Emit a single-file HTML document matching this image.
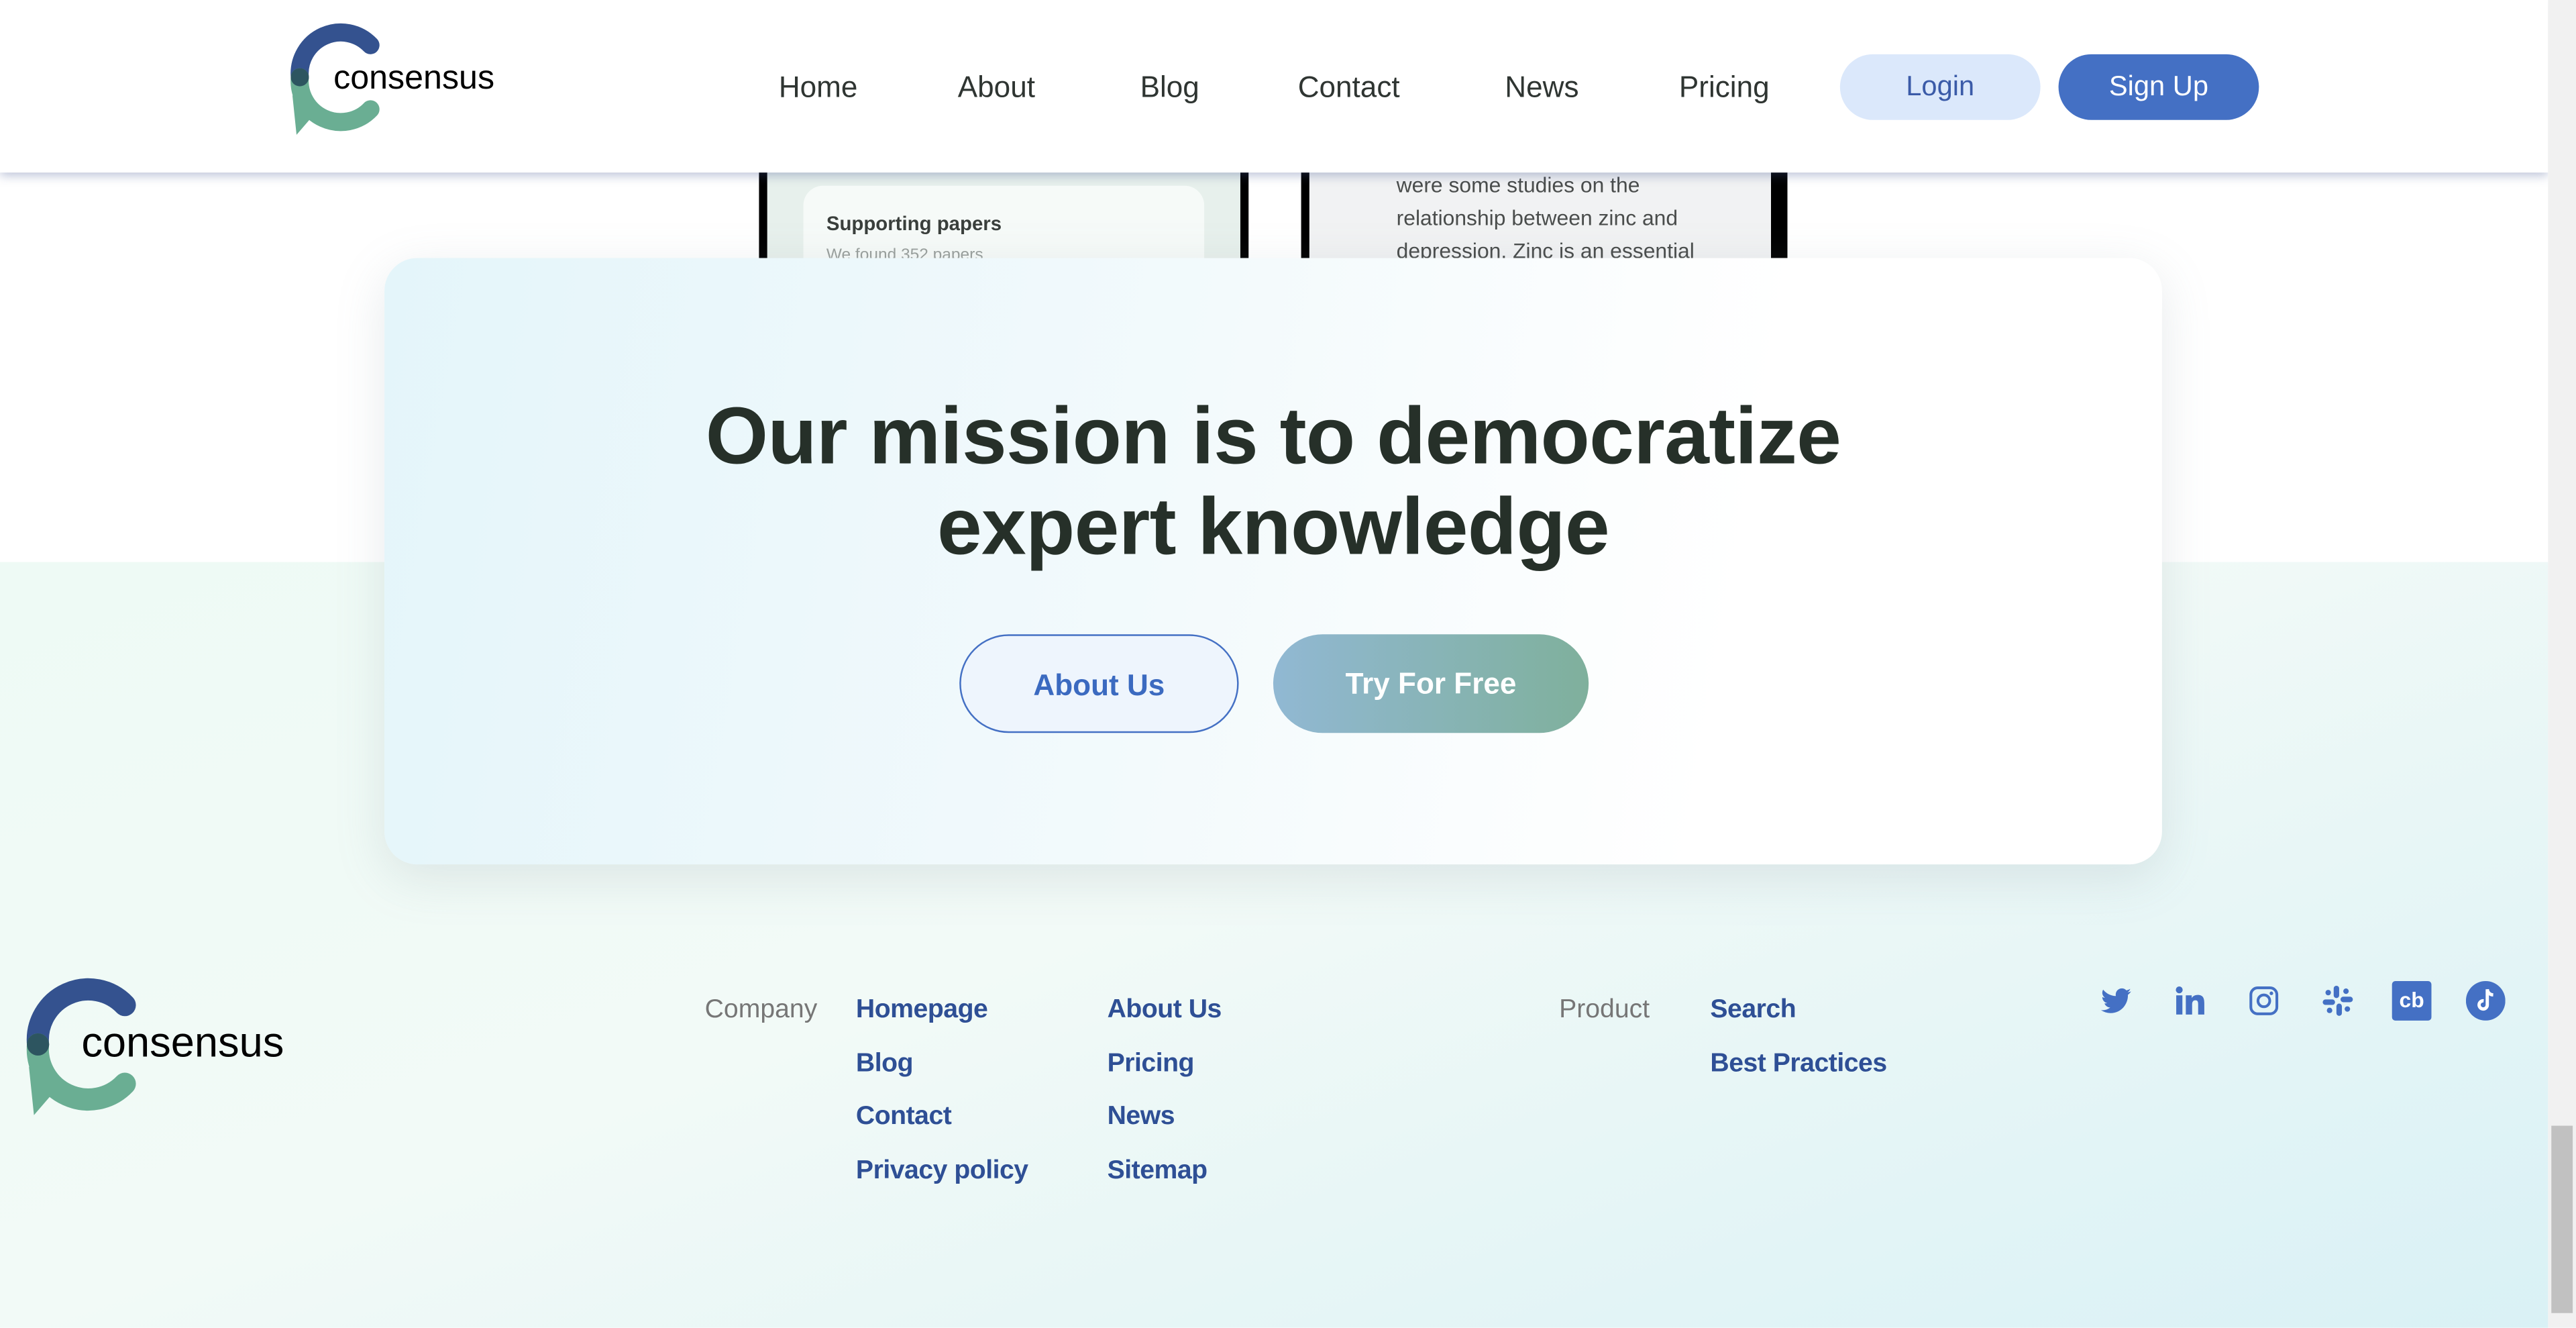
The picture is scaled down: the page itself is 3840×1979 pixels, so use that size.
<!DOCTYPE html>
<html><head><meta charset="utf-8">
<style>
html,body{margin:0;padding:0;width:3840px;height:1978px;overflow:hidden;background:#fff}
#s{position:absolute;left:0;top:0;width:1568px;height:808px;transform:scale(2.44898);transform-origin:0 0;font-family:"Liberation Sans",sans-serif;overflow:hidden}
.a{position:absolute}
.nav{position:absolute;top:43px;font-size:18px;color:#2f3532;line-height:20px}
.lk{position:absolute;font-size:16px;font-weight:bold;color:#2e4f95;line-height:18px;letter-spacing:-0.2px}
.gl{position:absolute;font-size:16px;color:#767676;line-height:18px}
.ic{position:absolute;top:599px;width:20px;height:20px}
</style></head><body><div id="s">
<div class="a" style="left:0;top:342px;width:1551px;height:466px;background:linear-gradient(160deg,#eefaf5 0%,#f2faf7 45%,#e2f4f6 80%,#d9f1f5 100%)"></div>
<div class="a" style="left:462px;top:95px;width:298px;height:62px;background:#000"></div>
<div class="a" style="left:467px;top:95px;width:288px;height:62px;background:#e7f0ec"></div>
<div class="a" style="left:489px;top:113px;width:244px;height:60px;background:#f6faf8;border-radius:12px"></div>
<div class="a" style="left:503px;top:129px;font-size:12px;font-weight:bold;color:#3a3f3c">Supporting papers</div>
<div class="a" style="left:503px;top:150px;font-size:10px;color:#9aa09d">We found 352 papers</div>
<div class="a" style="left:792px;top:95px;width:296px;height:62px;background:#000"></div>
<div class="a" style="left:797px;top:95px;width:281px;height:62px;background:#f1f2f3"></div>
<div class="a" style="left:850px;top:103px;font-size:13px;line-height:20px;color:#4a4d4c">were some studies on the<br>relationship between zinc and<br>depression. Zinc is an essential</div>
<div class="a" style="left:0;top:0;width:1551px;height:105px;background:#fff;box-shadow:0 2px 6px rgba(60,80,140,.35)"></div>
<svg class="a" style="left:176px;top:14px" width="130" height="70" viewBox="0 0 130 70">
<polygon points="2,44 14,57 4.5,68" fill="#6aae93"/>
<path d="M49.5 13.5 A25 25 0 0 0 6.5 33" fill="none" stroke="#34528f" stroke-width="11" stroke-linecap="round"/>
<path d="M6.5 33 A25 25 0 0 0 49.5 52.5" fill="none" stroke="#6aae93" stroke-width="11" stroke-linecap="round"/>
<circle cx="6.5" cy="33" r="5.5" fill="#2d5560"/>
<text x="27" y="40" font-family="Liberation Sans,sans-serif" font-size="20.5" fill="#000">consensus</text>
</svg>
<div class="nav" style="left:474px">Home</div>
<div class="nav" style="left:583px">About</div>
<div class="nav" style="left:694px">Blog</div>
<div class="nav" style="left:790px">Contact</div>
<div class="nav" style="left:916px">News</div>
<div class="nav" style="left:1022px">Pricing</div>
<div class="a" style="left:1120px;top:33px;width:122px;height:40px;border-radius:20px;background:#dbe8fb;color:#3b5ba8;font-size:17px;line-height:40px;text-align:center">Login</div>
<div class="a" style="left:1253px;top:33px;width:122px;height:40px;border-radius:20px;background:#4470c4;color:#fff;font-size:17px;line-height:40px;text-align:center">Sign Up</div>
<div class="a" style="left:234px;top:157px;width:1082px;height:369px;border-radius:20px;background:linear-gradient(100deg,#e4f5fa 0%,#f3fafc 45%,#ffffff 75%);box-shadow:0 8px 30px rgba(120,140,150,.18)"></div>
<div class="a" style="left:234px;top:239px;width:1082px;text-align:center;font-size:49px;font-weight:bold;color:#263029;line-height:55px;letter-spacing:-0.3px">Our mission is to democratize<br>expert knowledge</div>
<div class="a" style="left:584px;top:386px;width:168px;height:58px;border:1px solid #4470c4;border-radius:30px;background:#eef5fd;color:#3b6ac0;font-size:18px;font-weight:bold;line-height:60px;text-align:center">About Us</div>
<div class="a" style="left:775px;top:386px;width:192px;height:60px;border-radius:30px;background:linear-gradient(90deg,#91b8d3,#7fb09c);color:#fff;font-size:18px;font-weight:bold;line-height:61px;text-align:center">Try For Free</div>
<svg class="a" style="left:15px;top:595px" width="160" height="86" viewBox="0 0 130 70">
<polygon points="2,44 14,57 4.5,68" fill="#6aae93"/>
<path d="M49.5 13.5 A25 25 0 0 0 6.5 33" fill="none" stroke="#34528f" stroke-width="11" stroke-linecap="round"/>
<path d="M6.5 33 A25 25 0 0 0 49.5 52.5" fill="none" stroke="#6aae93" stroke-width="11" stroke-linecap="round"/>
<circle cx="6.5" cy="33" r="5.5" fill="#2d5560"/>
<text x="28" y="39" font-family="Liberation Sans,sans-serif" font-size="21" fill="#000">consensus</text>
</svg>
<div class="gl" style="left:429px;top:606px">Company</div>
<div class="lk" style="left:521px;top:606px">Homepage</div>
<div class="lk" style="left:521px;top:639px">Blog</div>
<div class="lk" style="left:521px;top:671px">Contact</div>
<div class="lk" style="left:521px;top:704px">Privacy policy</div>
<div class="lk" style="left:674px;top:606px">About Us</div>
<div class="lk" style="left:674px;top:639px">Pricing</div>
<div class="lk" style="left:674px;top:671px">News</div>
<div class="lk" style="left:674px;top:704px">Sitemap</div>
<div class="gl" style="left:949px;top:606px">Product</div>
<div class="lk" style="left:1041px;top:606px">Search</div>
<div class="lk" style="left:1041px;top:639px">Best Practices</div>
<svg class="ic" style="left:1278px" viewBox="0 0 24 24"><path fill="#4470c4" d="M23 5.1a9 9 0 0 1-2.6.7 4.5 4.5 0 0 0 2-2.5 9 9 0 0 1-2.8 1.1 4.5 4.5 0 0 0-7.700 4.1A12.8 12.8 0 0 1 2.6 3.8a4.5 4.5 0 0 0 1.4 6 4.5 4.5 0 0 1-2-.6 4.5 4.5 0 0 0 3.6 4.5 4.5 4.5 0 0 1-2 .1 4.5 4.5 0 0 0 4.2 3.1A9 9 0 0 1 1 18.8 12.8 12.8 0 0 0 7.9 21c8.3 0 12.8-6.9 12.8-12.8v-.6A9 9 0 0 0 23 5.1z"/></svg>
<svg class="ic" style="left:1323px" viewBox="0 0 24 24"><rect x="2" y="8" width="4.5" height="14" fill="#4470c4"/><circle cx="4.2" cy="4" r="2.5" fill="#4470c4"/><path fill="#4470c4" d="M9 8h4.3v2c.7-1.3 2.3-2.3 4.4-2.3 4 0 4.8 2.6 4.8 6V22H18v-7.2c0-1.7-.1-3.2-2-3.2s-2.4 1.5-2.4 3.1V22H9z"/></svg>
<svg class="ic" style="left:1368px" viewBox="0 0 24 24"><rect x="2.5" y="2.5" width="19" height="19" rx="5" fill="none" stroke="#4470c4" stroke-width="2"/><circle cx="12" cy="12" r="4.3" fill="none" stroke="#4470c4" stroke-width="2"/><circle cx="17.5" cy="6.5" r="1.3" fill="#4470c4"/></svg>
<svg class="ic" style="left:1413px" viewBox="0 0 24 24" fill="#4470c4"><rect x="9" y="1" width="4" height="9" rx="2"/><rect x="14" y="9" width="9" height="4" rx="2"/><rect x="11" y="14" width="4" height="9" rx="2"/><rect x="1" y="11" width="9" height="4" rx="2"/><circle cx="18" cy="5" r="2"/><circle cx="5" cy="6" r="2"/><circle cx="6" cy="19" r="2"/><circle cx="19" cy="18" r="2"/></svg>
<div class="a" style="left:1456px;top:597px;width:24px;height:24px;background:#4470c4;border-radius:2px;color:#fff;font-size:13px;font-weight:bold;line-height:24px;text-align:center">cb</div>
<svg class="a" style="left:1501px;top:597px" width="24" height="24" viewBox="0 0 24 24"><circle cx="12" cy="12" r="12" fill="#4470c4"/><path d="M13 5v9.5a2.5 2.5 0 1 1-2.2-2.5" fill="none" stroke="#fff" stroke-width="2"/><path d="M13 5c.3 2 1.6 3.3 3.6 3.4" fill="none" stroke="#fff" stroke-width="2"/></svg>
<div class="a" style="left:1551px;top:0;width:17px;height:808px;background:#f1f1f1"></div>
<div class="a" style="left:1553px;top:685px;width:13px;height:114px;background:#c1c1c1"></div>
</div></body></html>
